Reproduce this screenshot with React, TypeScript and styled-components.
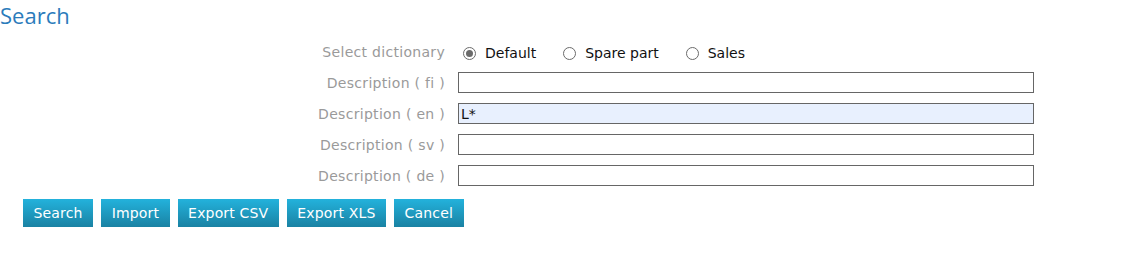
import React, { useState } from 'react';
import styled, { createGlobalStyle } from 'styled-components';

const GlobalStyle = createGlobalStyle`
  body {
    margin: 0;
    background: #fff;
    font-family: 'DejaVu Sans', Verdana, sans-serif;
  }
`;

const Page = styled.div`
  width: 1125px;
  height: 280px;
  box-sizing: border-box;
`;

const Title = styled.h1`
  margin: 0;
  font-family: 'Open Sans', sans-serif;
  font-weight: 400;
  font-size: 22px;
  line-height: 30px;
  color: #2b7bbb;
`;

const Form = styled.div`
  display: grid;
  grid-template-columns: 445px 576px;
  column-gap: 13px;
  row-gap: 10px;
  margin-top: 11px;
  align-items: center;
`;

const Label = styled.div`
  text-align: right;
  font-size: 14px;
  letter-spacing: 0.3px;
  color: #9a9a9a;
  white-space: nowrap;
`;

const RadioGroup = styled.div`
  display: flex;
  align-items: center;
  gap: 27px;
  height: 21px;
  box-sizing: border-box;
  padding: 3px 0 0 5px;
`;

const RadioLabel = styled.label`
  display: flex;
  align-items: center;
  gap: 9px;
  font-size: 14px;
  color: #111;
  cursor: pointer;
`;

const Radio = styled.input.attrs({ type: 'radio' })`
  appearance: none;
  margin: 0;
  width: 13px;
  height: 13px;
  border: 1px solid #6b6b6b;
  border-radius: 50%;
  box-sizing: border-box;
  display: grid;
  place-items: center;
  background: #fff;

  &:checked::after {
    content: '';
    width: 7px;
    height: 7px;
    border-radius: 50%;
    background: #6b6b6b;
  }
`;

const TextInput = styled.input<{ $active?: boolean }>`
  width: 576px;
  height: 21px;
  box-sizing: border-box;
  border: 1px solid #666;
  padding: 0 2px;
  font-family: 'DejaVu Sans', Verdana, sans-serif;
  font-size: 14px;
  color: #111;
  outline: none;
  background: ${(p) => (p.$active ? '#e8f0fe' : '#fff')};
`;

const Buttons = styled.div`
  display: flex;
  gap: 8px;
  padding-left: 23px;
  margin-top: 13px;
`;

const Button = styled.button`
  height: 28px;
  padding: 0 10.5px;
  border: none;
  border-radius: 0;
  background: linear-gradient(#23b2dc, #1a82a3);
  color: #fff;
  font-family: 'DejaVu Sans', Verdana, sans-serif;
  font-size: 14px;
  letter-spacing: 0.17px;
  cursor: pointer;
`;

const fields = [
  { code: 'fi', value: '' },
  { code: 'en', value: 'L*' },
  { code: 'sv', value: '' },
  { code: 'de', value: '' },
];

export default function App() {
  const [dict, setDict] = useState('default');

  return (
    <Page>
      <GlobalStyle />
      <Title>Search</Title>
      <Form>
        <Label>Select dictionary</Label>
        <RadioGroup>
          {[
            ['default', 'Default'],
            ['spare', 'Spare part'],
            ['sales', 'Sales'],
          ].map(([key, text]) => (
            <RadioLabel key={key}>
              <Radio name="dict" checked={dict === key} onChange={() => setDict(key)} />
              {text}
            </RadioLabel>
          ))}
        </RadioGroup>
        {fields.map((f) => (
          <React.Fragment key={f.code}>
            <Label>Description ( {f.code} )</Label>
            <TextInput defaultValue={f.value} $active={f.code === 'en'} />
          </React.Fragment>
        ))}
      </Form>
      <Buttons>
        <Button>Search</Button>
        <Button>Import</Button>
        <Button>Export CSV</Button>
        <Button>Export XLS</Button>
        <Button>Cancel</Button>
      </Buttons>
    </Page>
  );
}
